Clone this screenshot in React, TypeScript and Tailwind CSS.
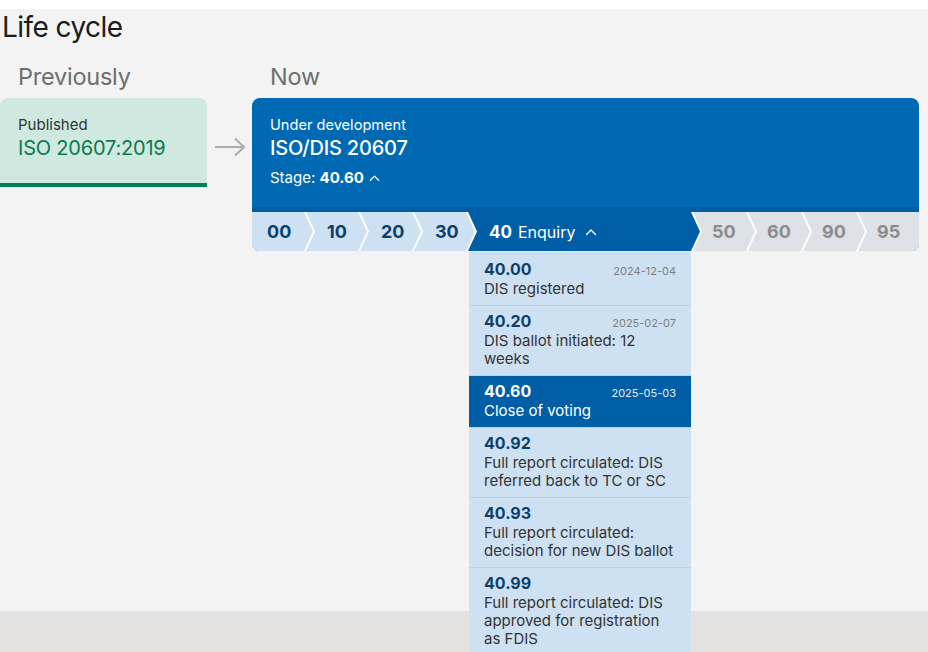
import React from 'react';

interface SubStage {
  code: string;
  date?: string;
  label: string;
  current?: boolean;
}

const subStages: SubStage[] = [
  { code: '40.00', date: '2024-12-04', label: 'DIS registered' },
  { code: '40.20', date: '2025-02-07', label: 'DIS ballot initiated: 12 weeks' },
  { code: '40.60', date: '2025-05-03', label: 'Close of voting', current: true },
  { code: '40.92', label: 'Full report circulated: DIS referred back to TC or SC' },
  { code: '40.93', label: 'Full report circulated: decision for new DIS ballot' },
  { code: '40.99', label: 'Full report circulated: DIS approved for registration as FDIS' },
];

const pastStages = ['10', '20', '30'];
const futureStages = ['50', '60', '90'];

const Caret = ({ className }: { className?: string }) => (
  <svg viewBox="0 0 12 8" className={className} fill="none" stroke="currentColor" strokeWidth="1.4">
    <polyline points="1.5,6.5 6,2 10.5,6.5" strokeLinecap="round" strokeLinejoin="round" />
  </svg>
);

export default function App() {
  return (
    <div className="min-h-screen bg-white font-['Inter','Liberation_Sans',sans-serif]">
      <div className="h-[9px] bg-white" />
      <div className="bg-[#f3f3f3] h-[602px]">
        <h1 className="pl-[2px] pt-[1px] text-[28px] leading-[34px] tracking-[-0.02em] text-[#1c1c1c]">Life cycle</h1>

        <div className="mt-[18px] flex items-start">
          {/* Previously */}
          <div className="w-[207px] shrink-0">
            <h2 className="pl-[18px] text-[23.5px] leading-[30px] tracking-[-0.01em] text-[#6e6e6e]">Previously</h2>
            <div className="mt-[6px] rounded-t-lg bg-[#cfe9e0] border-b-4 border-[#00805a] px-[18px] pt-[17px] pb-[22px]">
              <div className="text-[15px] leading-5 text-[#333]">Published</div>
              <div className="text-[20px] leading-[26px] tracking-[-0.01em] text-[#0a7a52]">ISO 20607:2019</div>
            </div>
          </div>

          {/* Arrow */}
          <div className="w-[45px] shrink-0 flex justify-center pt-[75px] pl-[1px]">
            <svg width="32" height="20" viewBox="0 0 32 20" fill="none" stroke="#a9adb1" strokeWidth="2">
              <line x1="1" y1="10" x2="30" y2="10" />
              <polyline points="21,1.5 30,10 21,18.5" />
            </svg>
          </div>

          {/* Now */}
          <div className="w-[667px] shrink-0">
            <h2 className="pl-[18px] text-[23.5px] leading-[30px] tracking-[-0.01em] text-[#6e6e6e]">Now</h2>
            <div className="mt-[6px] rounded-lg bg-[#0069b4]">
              <div className="px-[18px] pt-[17px] pb-[19px] text-white">
                <div className="text-[14.6px] leading-5">Under development</div>
                <div className="text-[20px] leading-[26px] font-medium tracking-[-0.01em]">ISO/DIS 20607</div>
                <div className="mt-[7px] text-[15px] leading-5 flex items-center">
                  Stage:&nbsp;<span className="font-bold">40.60</span>
                  <Caret className="ml-[5px] w-[11px] h-[8px]" />
                </div>
              </div>

              <div className="relative bg-[#005ea6] pt-[5px] rounded-b-lg">
                <div className="flex h-[39px] bg-white rounded-b-lg overflow-hidden text-[18px] font-bold">
                  <div className="w-[61px] shrink-0 bg-[#cde1f2] text-[#0d3f6d] flex items-center pl-[15px] [clip-path:polygon(0_0,calc(100%_-_9px)_0,100%_50%,calc(100%_-_9px)_100%,0_100%)]">
                    00
                  </div>
                  {pastStages.map((s) => (
                    <div
                      key={s}
                      className="w-[61px] shrink-0 -ml-[7px] bg-[#cde1f2] text-[#0d3f6d] flex items-center pl-[21px] [clip-path:polygon(0_0,calc(100%_-_9px)_0,100%_50%,calc(100%_-_9px)_100%,0_100%,9px_50%)]"
                    >
                      {s}
                    </div>
                  ))}
                  <div className="w-[232px] shrink-0 -ml-[7px] bg-[#005ea6] text-white flex items-center pl-[21px] [clip-path:polygon(0_0,calc(100%_-_9px)_0,100%_50%,calc(100%_-_9px)_100%,0_100%,9px_50%)]">
                    <span className="text-[17px] leading-6">
                      40<span className="font-normal text-[16px] ml-[6px]">Enquiry</span>
                    </span>
                    <Caret className="ml-[10px] w-[12px] h-[8px]" />
                  </div>
                  {futureStages.map((s) => (
                    <div
                      key={s}
                      className="w-[62px] shrink-0 -ml-[7px] bg-[#dee1e5] text-[#8c8c8c] flex items-center pl-[19px] [clip-path:polygon(0_0,calc(100%_-_9px)_0,100%_50%,calc(100%_-_9px)_100%,0_100%,9px_50%)]"
                    >
                      {s}
                    </div>
                  ))}
                  <div className="flex-1 -ml-[7px] bg-[#dee1e5] text-[#8c8c8c] flex items-center pl-[19px] [clip-path:polygon(0_0,100%_0,100%_100%,0_100%,9px_50%)]">
                    95
                  </div>
                </div>

                {/* Sub-stage dropdown */}
                <div className="absolute top-full left-[217px] w-[222px] z-10 bg-[#cde1f2] border-t border-[#e2eef9] pt-[2px]">
                  {subStages.map((s, i) => (
                    <div
                      key={s.code}
                      className={`px-[15px] pt-[5px] pb-[7px] ${i > 0 ? 'border-t border-[#b7d0e7]' : ''} ${
                        s.current ? 'bg-[#005ea6] text-white' : 'text-[#333]'
                      }`}
                    >
                      <div className="flex items-baseline justify-between h-[21px]">
                        <span className={`text-[16px] leading-[21px] font-bold ${s.current ? 'text-white' : 'text-[#0d3f6d]'}`}>
                          {s.code}
                        </span>
                        {s.date && (
                          <span className={`text-[11px] ${s.current ? 'text-[#e4edf6]' : 'text-[#808080]'}`}>{s.date}</span>
                        )}
                      </div>
                      <div className="text-[15px] leading-[18px]">{s.label}</div>
                    </div>
                  ))}
                </div>
              </div>
            </div>
          </div>
        </div>
      </div>
      <div className="h-[41px] bg-[#e4e3e1]" />
    </div>
  );
}
